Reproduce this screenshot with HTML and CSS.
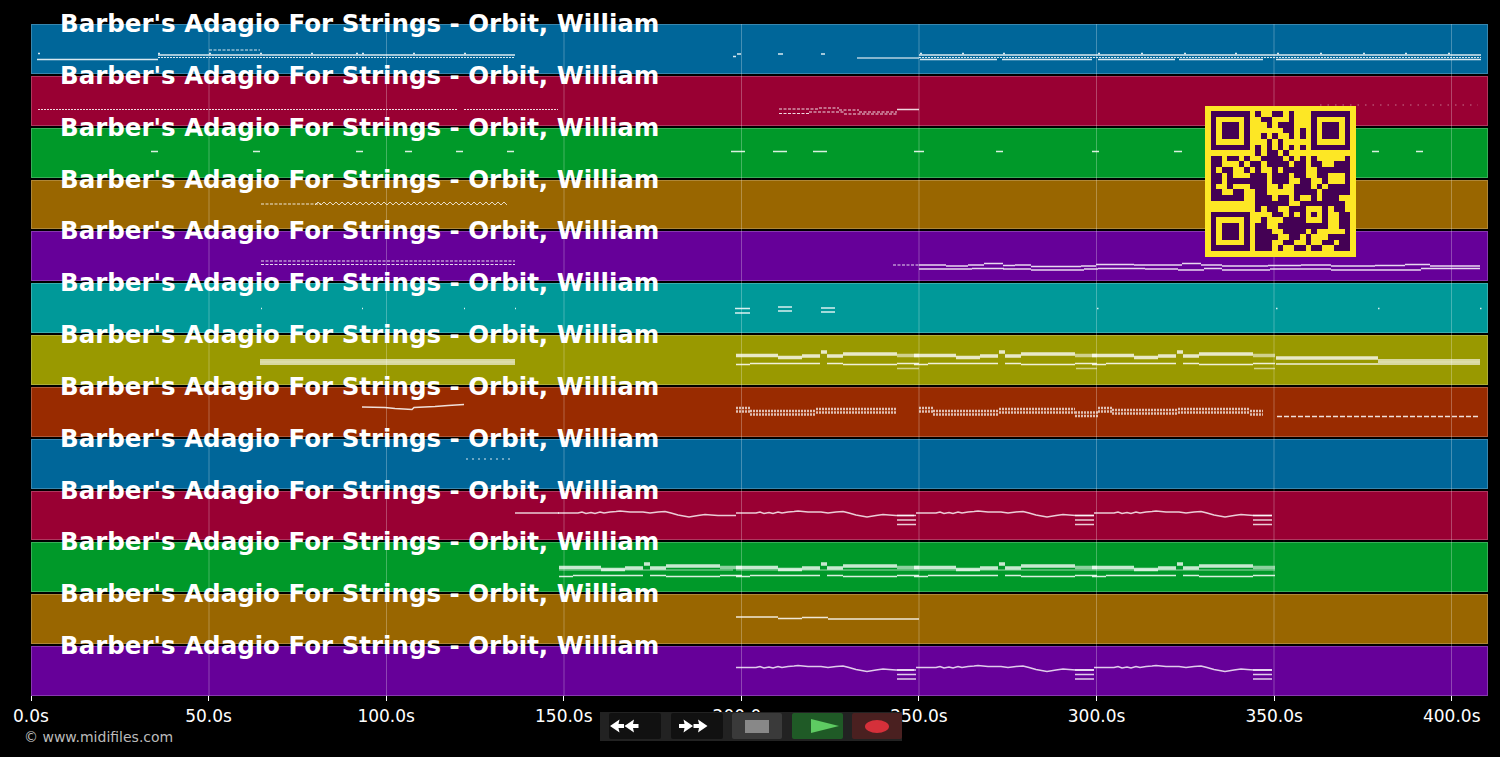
FILE: index.html
```html
<!DOCTYPE html>
<html>
<head>
    <title>Barber's Adagio For Strings - Orbit, William</title>
    <link rel="stylesheet" href="styles.css">
</head>
<body>
    <div class="chart">
        <div class="track blue"><div class="track-title">Barber's Adagio For Strings - Orbit, William</div></div>
        <div class="track crimson"><div class="track-title">Barber's Adagio For Strings - Orbit, William</div></div>
        <div class="track green"><div class="track-title">Barber's Adagio For Strings - Orbit, William</div></div>
        <div class="track brown"><div class="track-title">Barber's Adagio For Strings - Orbit, William</div></div>
        <div class="track purple"><div class="track-title">Barber's Adagio For Strings - Orbit, William</div></div>
        <div class="track teal"><div class="track-title">Barber's Adagio For Strings - Orbit, William</div></div>
        <div class="track olive"><div class="track-title">Barber's Adagio For Strings - Orbit, William</div></div>
        <div class="track rust"><div class="track-title">Barber's Adagio For Strings - Orbit, William</div></div>
        <div class="track blue"><div class="track-title">Barber's Adagio For Strings - Orbit, William</div></div>
        <div class="track crimson"><div class="track-title">Barber's Adagio For Strings - Orbit, William</div></div>
        <div class="track green"><div class="track-title">Barber's Adagio For Strings - Orbit, William</div></div>
        <div class="track brown"><div class="track-title">Barber's Adagio For Strings - Orbit, William</div></div>
        <div class="track purple"><div class="track-title">Barber's Adagio For Strings - Orbit, William</div></div>

        <!-- Notes and grid, drawn in page coordinates -->
        <svg class="notes" viewBox="31 24 1457 672" xmlns="http://www.w3.org/2000/svg">
            <defs>
                <polyline id="wiggle" points="0,513 20,513 24,512 28,513.5 33,512.5 37,513.5 42,512 46,513 52,512 58,511.5 62,511 72,512 85,512 92,513 100,512 107,511.5 113,513 120,515 131,517 140,515.5 147,514.5 153,515 160,515.5 178,515.5"/>
                <g id="triple">
                    <path d="M161 515.5h19M161 520h19M161 524.5h19"/>
                </g>
                <g id="ribbon">
                    <path class="thick" d="M0 355.5h42M42 357.5h24M66 356h18"/>
                    <path class="thick" d="M85 352h6M91 356h16M107 354h54"/>
                    <path class="thick pale" d="M161 355.5h22"/>
                    <path class="thin" d="M0 364.5h14M14 363.5h70M91 363.5h16M107 364.5h54M161 363.5h22"/>
                </g>
                <g id="hatch-a">
                    <path d="M736 408h14M750 411h66M816 409h81"/>
                    <path d="M919 408h14M933 411h66M999 409h76M1075 412.500h23M1098 408h14M1112 410h66M1178 409h72M1250 411h13"/>
                </g>
            </defs>

            <path class="grid" d="M209 24v672M386.5 24v672M564 24v672M741.5 24v672M919 24v672M1096.5 24v672M1274 24v672M1451.5 24v672"/>

            <!-- track 1 -->
            <path class="thin" d="M37 59.5h121"/>
            <path class="thin" d="M158 55h357M919 55h562"/>
            <path class="fine" d="M158 57.5h357M919 57.5h562"/>
            <path class="thin" d="M920 59.5h77M1002 59.5h90M1098 59.5h77M1179 59.5h84M1276 59.5h205"/>
            <path class="dots" d="M209 50h51"/>
            <path class="thin" d="M733 56.5h3M737 54h4M778 54h5M821 54h4"/>
            <path class="thin soft" d="M857 58h62"/>
            <path class="thin" d="M38 53.5h2M158 53.5h2M209 53.5h2M260 53.5h2M311 53.5h2M356 53.5h2M362 53.5h2M413 53.5h2M464 53.5h2M920 53.5h2M962 53.5h2M1003 53.5h2M1098 53.5h2M1141 53.5h2M1184 53.5h2M1235 53.5h2M1277 53.5h2M1320 53.5h2M1363 53.5h2M1405 53.5h2M1448 53.5h2"/>

            <!-- track 2 -->
            <path class="fine" d="M38 109.5h419M464 109.5h94"/>
            <path class="dots" d="M779 109h40M819 108h20M839 110h20M859 112h38M779 113.5h30M809 112h35M844 114h53"/>
            <path class="thin" d="M897 109.5h22"/>
            <path class="dots sparse" d="M1320 105h158"/>

            <!-- track 3 -->
            <path class="thin" d="M151 151.5h7M253 151.5h7M356 151.5h7M405 151.5h7M456 151.5h7M507 151.5h7M731 151.5h14M773 151.5h14M813 151.5h14M914 151.5h10M996 151.5h7M1092 151.5h7M1174 151.5h8M1372 151.5h7M1416 151.5h7"/>

            <!-- track 4 -->
            <path class="dots" d="M261 204h60"/>
            <path class="zigzag" d="M315 205l3-3l3 3l3-3l3 3l3-3l3 3l3-3l3 3l3-3l3 3l3-3l3 3l3-3l3 3l3-3l3 3l3-3l3 3l3-3l3 3l3-3l3 3l3-3l3 3l3-3l3 3l3-3l3 3l3-3l3 3l3-3l3 3l3-3l3 3l3-3l3 3l3-3l3 3l3-3l3 3l3-3l3 3l3-3l3 3l3-3l3 3l3-3l3 3l3-3l3 3l3-3l3 3l3-3l3 3l3-3l3 3l3-3l3 3l3-3l3 3l3-3l3 3l3-3l3 3"/>

            <!-- track 5 -->
            <path class="dots" d="M261 261h254M261 264.5h254M893 265h26"/>
            <path class="thin" d="M919 265h27M946 266h22M968 265h16M984 263.5h19M1003 265.5h12M1015 265h16M1031 266.5h50M1081 266h15M1096 264.5h38M1134 265h24M1158 265h24M1182 263.5h19M1201 265h21M1222 266h46M1268 265.5h33M1301 265h30M1331 266h44M1375 265.5h30M1405 264.5h25M1430 266h50"/>
            <path class="thin" d="M919 269h53M972 268.5h32M1003 269h28M1031 270h53M1084 269h14M1098 268.5h47M1145 269h33M1178 270h26M1204 268.5h18M1222 270h48M1270 269h61M1331 270h90M1421 268.5h59"/>

            <!-- track 6 -->
            <path class="thin" d="M261 308.5h1M362 308.5h1M464 308.5h1M515 308.5h1M1097 308.5h1.500M1276 308.500h1.500M1378 308.500h1.500M1480 308.500h1.500"/>
            <path class="thin" d="M735 308.5h15M735 313h15M778 307h14M778 311h14M821 308h14M821 312h14"/>

            <!-- track 7 -->
            <path class="band" d="M260 362h255"/>
            <path class="band-line" d="M260 362h255M1378 362h102"/>
            <use href="#ribbon" x="736"/>
            <use href="#ribbon" x="914"/>
            <use href="#ribbon" x="1092"/>
            <path class="thin pale" d="M897 368.500h22M1076 368.500h21M1254 368.500h21"/>
            <path class="thick" d="M1276 358h102"/>
            <path class="thin" d="M1276 364h102"/>
            <path class="band" d="M1378 362h102"/>

            <!-- track 8 -->
            <polyline class="thin" points="362,407 385,407.500 395,408.500 412,409.500 414,407.500 435,406.500 448,405.500 464,404.500"/>
            <use class="hatch" href="#hatch-a"/>
            <use class="hatch" href="#hatch-a" y="3.500"/>
            <path class="fine-dash" d="M1277 416.500h203"/>

            <!-- track 9 -->
            <path class="dots wide" d="M466 459h47"/>

            <!-- track 10 -->
            <g class="wiggle">
                <path d="M515 513h44"/>
                <use href="#wiggle" x="558"/>
                <use href="#wiggle" x="736"/>
                <use href="#wiggle" x="916"/>
                <use href="#wiggle" x="1094"/>
                <use href="#triple" x="736"/>
                <use href="#triple" x="914"/>
                <use href="#triple" x="1092"/>
            </g>

            <!-- track 11 -->
            <use href="#ribbon" x="559" y="212"/>
            <use href="#ribbon" x="736" y="212"/>
            <use href="#ribbon" x="914" y="212"/>
            <use href="#ribbon" x="1092" y="212"/>
            <path class="ribbon-glow" d="M559 570h174M736 570h183M919 570h178M1097 570h178"/>

            <!-- track 12 -->
            <path class="thin" d="M736 617h42M778 618.500h24M802 617.500h26M828 619h91"/>

            <!-- track 13 -->
            <g class="wiggle" transform="translate(0 154.500)">
                <use href="#wiggle" x="736"/>
                <use href="#wiggle" x="916"/>
                <use href="#wiggle" x="1094"/>
                <use href="#triple" x="736"/>
                <use href="#triple" x="914"/>
                <use href="#triple" x="1092"/>
            </g>
        </svg>

        <!-- QR overlay -->
        <svg class="qr" viewBox="0 0 27 27" xmlns="http://www.w3.org/2000/svg">
            <rect class="qr-bg" width="27" height="27"/>
            <g transform="translate(1 1)">
                <path class="qr-finder" fill-rule="evenodd" d="M0 0h7v7h-7zM1 1v5h5v-5zM2 2h3v3h-3zM18 0h7v7h-7zM19 1v5h5v-5zM20 2h3v3h-3zM0 18h7v7h-7zM1 19v5h5v-5zM2 20h3v3h-3z"/>
                <path class="qr-dots" d="M8 .5h1M11 .5h2M14 .5h1M9 1.500h2M14 1.500h1M10 2.500h1M12 2.500h3M13 3.500h2M16 3.500h1M9 4.500h1M11 4.500h1M14 4.500h1M16 4.500h1M10 5.500h1M12 5.500h1M8 6.500h1M10 6.500h1M12 6.500h1M14 6.500h1M16 6.500h1M8 7.500h1M10 7.500h2M13 7.500h1M0 8.500h2M3 8.500h2M6 8.500h1M9 8.500h4M14 8.500h1M16 8.500h1M18 8.500h1M24 8.500h1M0 9.500h2M5 9.500h1M7 9.500h2M10 9.500h4M15 9.500h2M18 9.500h2M22 9.500h3M0 10.500h1M2 10.500h2M6 10.500h1M8 10.500h1M11 10.500h1M13 10.500h4M19 10.500h6M0 11.500h2M3 11.500h1M7 11.500h3M11 11.500h3M15 11.500h2M19 11.500h2M24 11.500h1M0 12.500h2M3 12.500h7M11 12.500h3M16 12.500h2M20 12.500h1M24 12.500h1M0 13.500h1M3 13.500h1M7 13.500h3M12 13.500h1M15 13.500h3M19 13.500h1M21 13.500h4M0 14.500h2M4 14.500h2M8 14.500h2M15 14.500h4M20 14.500h5M0 15.500h6M8 15.500h3M12 15.500h2M15 15.500h1M18 15.500h1M20 15.500h3M8 16.500h2M10 16.500h4M16 16.500h5M21 16.500h3M8 17.500h1M10 17.500h2M14 17.500h3M20 17.500h1M22 17.500h2M11 18.500h2M14 18.500h1M16 18.500h1M18 18.500h1M20 18.500h1M23 18.500h2M9 19.500h1M13 19.500h4M20 19.500h1M23 19.500h2M8 20.500h2M12 20.500h9M23 20.500h2M8 21.500h3M13 21.500h4M18 21.500h1M24 21.500h1M8 22.500h4M14 22.500h2M17 22.500h1M21 22.500h4M8 23.500h3M13 23.500h2M17 23.500h1M20 23.500h2M23 23.500h2M8 24.500h3M12 24.500h1M15 24.500h2M18 24.500h2M22 24.500h3"/>
            </g>
        </svg>
    </div>

    <div class="axis">
        <div class="tick">0.0s</div>
        <div class="tick">50.0s</div>
        <div class="tick">100.0s</div>
        <div class="tick">150.0s</div>
        <div class="tick">200.0s</div>
        <div class="tick">250.0s</div>
        <div class="tick">300.0s</div>
        <div class="tick">350.0s</div>
        <div class="tick">400.0s</div>
    </div>

    <div class="credit">© www.midifiles.com</div>

    <!-- Transport controls sit on top of the axis -->
    <div class="transport">
        <button class="btn btn-seek btn-back" title="Rewind">
            <svg class="seek-icon" viewBox="0 0 29 14" xmlns="http://www.w3.org/2000/svg">
                <path d="M0 7L9.500 .5L8.500 5H14V9H8.500L9.500 13.500zM14.500 7L24 .5L23 5H28.500V9H23L24 13.500z"/>
            </svg>
        </button>
        <button class="btn btn-seek btn-next" title="Forward">
            <svg class="seek-icon" viewBox="0 0 29 14" xmlns="http://www.w3.org/2000/svg">
                <path d="M14 7L4.500 .5L5.500 5H0V9H5.500L4.500 13.500zM28.500 7L19 .5L20 5H14.500V9H20L19 13.500z"/>
            </svg>
        </button>
        <button class="btn btn-stop" title="Stop"><span class="stop-icon"></span></button>
        <button class="btn btn-play" title="Play">
            <svg class="play-icon" viewBox="0 0 28 14" xmlns="http://www.w3.org/2000/svg"><path d="M0 0L28 7L0 14z"/></svg>
        </button>
        <button class="btn btn-rec" title="Record"><span class="rec-icon"></span></button>
    </div>
</body>
</html>
```

FILE: styles.css
```css
html, body {
    margin: 0;
    height: 757px;
    overflow: hidden;
    background-color: #000;
    color: #fff;
    font-family: "DejaVu Sans", sans-serif;
}
.chart {
    position: relative;
    display: grid;
    grid-template-rows: repeat(13, 1fr);
    row-gap: 2px;
    width: 1457px;
    height: 672px;
    margin: 24px 0 0 31px;
}
.track {
    position: relative;
    box-sizing: border-box;
    border: 1px solid rgba(255, 255, 255, 0.22);
}
.blue { background-color: #006699; }
.crimson { background-color: #990033; }
.green { background-color: #009929; }
.brown { background-color: #996600; }
.purple { background-color: #660099; }
.teal { background-color: #009999; }
.olive { background-color: #999900; }
.rust { background-color: #992b00; }
.track-title {
    position: absolute;
    top: -16px;
    left: 28px;
    z-index: 3;
    font-size: 24.5px;
    font-weight: bold;
    line-height: 30px;
    white-space: nowrap;
}
/* Notes layer */
.notes {
    position: absolute;
    top: 0;
    left: 0;
    z-index: 1;
    width: 1457px;
    height: 672px;
    fill: none;
    stroke: #fff;
}
.grid {
    stroke: rgba(255, 255, 255, 0.27);
    stroke-width: 1;
}
.thin {
    stroke-width: 1.5;
    stroke-opacity: 0.85;
}
.thick {
    stroke-width: 3.5;
    stroke-opacity: 0.78;
}
.pale {
    stroke-opacity: 0.55;
}
.soft {
    stroke-opacity: 0.7;
}
.fine {
    stroke-width: 1.2;
    stroke-opacity: 0.85;
    stroke-dasharray: 2 1;
}
.fine-dash {
    stroke-width: 1.4;
    stroke-opacity: 0.85;
    stroke-dasharray: 5 2;
}
.dots {
    stroke-width: 1.2;
    stroke-opacity: 0.85;
    stroke-dasharray: 3 1.500;
}
.dots.sparse {
    stroke-opacity: 0.45;
    stroke-dasharray: 1.500 6;
}
.dots.wide {
    stroke-dasharray: 2 4;
}
.zigzag {
    stroke-width: 0.9;
    stroke-opacity: 0.85;
}
.band {
    stroke-width: 6;
    stroke-opacity: 0.62;
}
.band-line {
    stroke-width: 1;
    stroke-opacity: 0.25;
}
.ribbon-glow {
    stroke-width: 2;
    stroke-opacity: 0.3;
}
.hatch {
    stroke-width: 2.500;
    stroke-opacity: 0.7;
    stroke-dasharray: 2 1;
}
.wiggle {
    stroke-width: 1.500;
    stroke-opacity: 0.8;
}
/* QR code */
.qr {
    position: absolute;
    top: 81px;
    left: 1174px;
    z-index: 2;
    width: 151px;
    height: 152px;
    shape-rendering: crispEdges;
}
.qr-bg {
    fill: #fde725;
}
.qr-finder {
    fill: #440154;
}
.qr-dots {
    fill: none;
    stroke: #440154;
    stroke-width: 1;
}
/* Time axis */
.axis {
    display: flex;
    margin-left: -57.800px;
}
.tick {
    flex: 0 0 177.600px;
    display: flex;
    flex-direction: column;
    align-items: center;
    font-size: 17px;
    line-height: 20px;
}
.tick::before {
    content: "";
    width: 1px;
    height: 5px;
    margin-bottom: 5px;
    background-color: #fff;
}
.credit {
    margin: 0 0 0 24px;
    padding-top: 1px;
    font-size: 14px;
    line-height: 20px;
    color: #bbb;
}
/* Transport */
.transport {
    position: absolute;
    top: 712px;
    left: 600px;
    display: flex;
    gap: 9.500px;
    box-sizing: border-box;
    width: 302px;
    height: 29px;
    padding: 1px 0 2px 9px;
    background-color: #222;
}
.btn {
    display: flex;
    align-items: center;
    justify-content: center;
    flex: none;
    width: 50px;
    height: 26px;
    padding: 0;
    border: 0;
    border-radius: 2px;
}
.btn-seek {
    width: 52px;
    background-color: #111;
    justify-content: flex-start;
}
.btn-back {
    padding-left: 1px;
}
.btn-next {
    padding-left: 8.500px;
}
.btn-stop {
    background-color: #3a3a3a;
}
.btn-play {
    width: 51px;
    background-color: #1f5a26;
}
.btn-rec {
    background-color: #4a2020;
}
.seek-icon {
    width: 29px;
    height: 14px;
    fill: #fff;
}
.stop-icon {
    width: 24px;
    height: 13px;
    background-color: #888;
}
.play-icon {
    width: 28px;
    height: 14px;
    margin-left: 16px;
    fill: #5ecb62;
}
.rec-icon {
    width: 24px;
    height: 13px;
    border-radius: 50%;
    background-color: #d5303a;
}
```
